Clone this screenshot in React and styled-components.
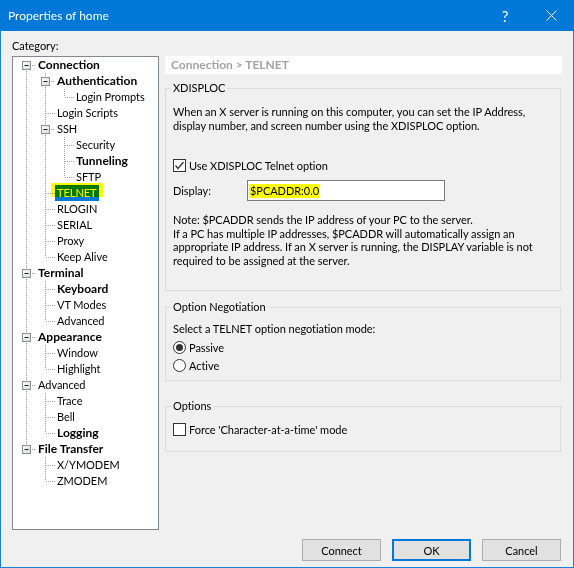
import React from "react";
import styled, { createGlobalStyle, css } from "styled-components";

const GlobalStyle = createGlobalStyle`
  html, body {
    margin: 0;
    padding: 0;
    background: #ffffff;
  }
  body {
    font-family: "Segoe UI", Lato, "Liberation Sans", sans-serif;
    font-size: 11px;
    letter-spacing: -0.04px;
    color: #000;
  }
  * {
    box-sizing: border-box;
  }
`;

const Window = styled.div`
  width: 574px;
  height: 568px;
  display: flex;
  flex-direction: column;
  background: #f0f0f0;
  border: 1px solid #1a7fd6;
  border-top: none;
`;

const TitleBar = styled.div`
  height: 31px;
  flex: none;
  display: flex;
  align-items: center;
  background: #0078d7;
  color: #fff;
  padding-left: 8px;
  margin: 0 -1px;
`;

const Title = styled.span`
  flex: 1;
  font-size: 12px;
  letter-spacing: 0;
`;

const CaptionButton = styled.span`
  width: 46px;
  height: 31px;
  display: flex;
  align-items: center;
  justify-content: center;
  font-size: 15px;
  color: #fff;
`;

const Body = styled.div`
  flex: 1;
  display: flex;
  flex-direction: column;
  padding: 7px 12px 6px 11px;
`;

const CategoryLabel = styled.div`
  height: 18px;
  line-height: 15px;
`;

const Main = styled.div`
  height: 474px;
  display: flex;
  gap: 6px;
`;

const Tree = styled.div`
  width: 147px;
  flex: none;
  background: #fff;
  border: 1px solid #828790;
`;

const TreeRow = styled.div`
  height: 16px;
  display: flex;
  padding-left: 4px;
`;

const Cell = styled.svg`
  width: 19px;
  height: 16px;
  flex: none;
  display: block;
`;

const TreeLabel = styled.span`
  position: relative;
  padding: 0 2px;
  line-height: 16px;
  white-space: nowrap;
  ${(p) =>
    p.$bold &&
    css`
      font-weight: 700;
      font-size: 12px;
      letter-spacing: 0;
    `}
  ${(p) =>
    p.$selected &&
    css`
      background: #0078d7;
      color: #fff;
      &::after {
        content: "";
        position: absolute;
        left: -4px;
        right: -4px;
        top: -2px;
        bottom: 4px;
        background: #ffff00;
        mix-blend-mode: multiply;
      }
    `}
`;

const Panel = styled.div`
  flex: 1;
  display: flex;
  flex-direction: column;
`;

const Header = styled.div`
  height: 18px;
  line-height: 18px;
  background: #fff;
  color: #a3a3a3;
  font-weight: 700;
  font-size: 12px;
  letter-spacing: 0;
  padding-left: 6px;
  margin-right: -1px;
`;

const Group = styled.fieldset`
  margin: ${(p) => p.$top}px 0 0;
  padding: 0 7px ${(p) => p.$bottom}px;
  border: 1px solid #dcdcdc;
  min-width: 0;
`;

const Legend = styled.legend`
  padding: 0 2px;
  margin-left: -2px;
  line-height: 14px;
`;

const Text = styled.p`
  margin: ${(p) => p.$top || 0}px 0 0;
  line-height: ${(p) => p.$lh || 14}px;
`;

const CheckRow = styled.label`
  display: flex;
  align-items: center;
  gap: 3px;
  height: ${(p) => p.$h || 16}px;
  margin-top: ${(p) => p.$top || 0}px;
`;

const Box = styled.span`
  width: 13px;
  height: 13px;
  flex: none;
  border: 1px solid #333;
  background: #fff;
  display: flex;
  align-items: center;
  justify-content: center;
`;

const Radio = styled.span`
  width: 13px;
  height: 13px;
  flex: none;
  border: 1px solid #333;
  border-radius: 50%;
  background: #fff;
  display: flex;
  align-items: center;
  justify-content: center;
  &::after {
    content: "";
    width: 7px;
    height: 7px;
    border-radius: 50%;
    background: ${(p) => (p.$checked ? "#333" : "transparent")};
  }
`;

const DisplayRow = styled.div`
  display: flex;
  align-items: center;
  margin-top: 7px;
`;

const DisplayLabel = styled.span`
  width: 74px;
`;

const Input = styled.div`
  width: 198px;
  height: 21px;
  background: #fff;
  border: 1px solid #7a7a7a;
  padding-left: 1px;
  display: flex;
  align-items: center;
`;

const Mark = styled.span`
  background: #ffff00;
  padding: 0 1px;
  line-height: 14px;
`;

const Footer = styled.div`
  display: flex;
  justify-content: flex-end;
  gap: 11px;
  margin-top: 9px;
`;

const Button = styled.button`
  width: 79px;
  height: 22px;
  font: inherit;
  letter-spacing: inherit;
  color: #000;
  background: #e1e1e1;
  border: ${(p) => (p.$default ? "2px solid #0078d7" : "1px solid #adadad")};
  padding: 0;
`;

const treeItems = [
  { label: "Connection", level: 0, bold: true, box: true },
  { label: "Authentication", level: 1, bold: true, box: true },
  { label: "Login Prompts", level: 2 },
  { label: "Login Scripts", level: 1 },
  { label: "SSH", level: 1, box: true },
  { label: "Security", level: 2 },
  { label: "Tunneling", level: 2, bold: true },
  { label: "SFTP", level: 2 },
  { label: "TELNET", level: 1, selected: true },
  { label: "RLOGIN", level: 1 },
  { label: "SERIAL", level: 1 },
  { label: "Proxy", level: 1 },
  { label: "Keep Alive", level: 1 },
  { label: "Terminal", level: 0, bold: true, box: true },
  { label: "Keyboard", level: 1, bold: true },
  { label: "VT Modes", level: 1 },
  { label: "Advanced", level: 1 },
  { label: "Appearance", level: 0, bold: true, box: true },
  { label: "Window", level: 1 },
  { label: "Highlight", level: 1 },
  { label: "Advanced", level: 0, box: true },
  { label: "Trace", level: 1 },
  { label: "Bell", level: 1 },
  { label: "Logging", level: 1, bold: true },
  { label: "File Transfer", level: 0, bold: true, box: true },
  { label: "X/YMODEM", level: 1 },
  { label: "ZMODEM", level: 1 },
];

// does a sibling at this level follow item i before its parent ends
const hasNextAt = (i, lvl) => {
  for (let j = i + 1; j < treeItems.length; j++) {
    if (treeItems[j].level < lvl) return false;
    if (treeItems[j].level === lvl) return true;
  }
  return false;
};

const DOT = { stroke: "#a0a0a0", strokeWidth: 1, strokeDasharray: "1 1" };

const GuideCell = ({ on }) => (
  <Cell viewBox="0 0 19 16">
    {on && <line x1="9.5" y1="0" x2="9.5" y2="16" {...DOT} />}
  </Cell>
);

const ConnectorCell = ({ first, next, box }) => (
  <Cell viewBox="0 0 19 16">
    <defs>
      <linearGradient id="tbox" x1="0" y1="0" x2="1" y2="1">
        <stop offset="0" stopColor="#ffffff" />
        <stop offset="1" stopColor="#d8d8d8" />
      </linearGradient>
    </defs>
    {!first && <line x1="9.5" y1="0" x2="9.5" y2="8" {...DOT} />}
    {next && <line x1="9.5" y1="8" x2="9.5" y2="16" {...DOT} />}
    <line x1={box ? 15 : 10} y1="8.5" x2="19" y2="8.5" {...DOT} />
    {box && (
      <g>
        <rect x="5.5" y="4.5" width="8" height="8" fill="url(#tbox)" stroke="#8c8f94" />
        <line x1="7.5" y1="8.5" x2="11.5" y2="8.5" stroke="#222" />
      </g>
    )}
  </Cell>
);

const TreeView = () => (
  <Tree>
    {treeItems.map((item, i) => (
      <TreeRow key={i}>
        {Array.from({ length: item.level }, (_, k) => (
          <GuideCell key={k} on={hasNextAt(i, k)} />
        ))}
        <ConnectorCell first={i === 0} next={hasNextAt(i, item.level)} box={item.box} />
        <TreeLabel $bold={item.bold} $selected={item.selected}>
          {item.label}
        </TreeLabel>
      </TreeRow>
    ))}
  </Tree>
);

const CheckMark = () => (
  <svg width="11" height="11" viewBox="0 0 11 11">
    <polyline points="1.5,5.5 4,8.5 9.5,2" fill="none" stroke="#333" strokeWidth="1.3" />
  </svg>
);

const App = () => (
  <>
    <GlobalStyle />
    <Window>
      <TitleBar>
        <Title>Properties of home</Title>
        <CaptionButton>?</CaptionButton>
        <CaptionButton>
          <svg width="11" height="11" viewBox="0 0 11 11">
            <path d="M0.5 0.5L10.5 10.5M10.5 0.5L0.5 10.5" stroke="#fff" strokeWidth="1" />
          </svg>
        </CaptionButton>
      </TitleBar>
      <Body>
        <CategoryLabel>Category:</CategoryLabel>
        <Main>
          <TreeView />
          <Panel>
            <Header>Connection &gt; TELNET</Header>
            <Group $top={7} $bottom={23}>
              <Legend>XDISPLOC</Legend>
              <Text $top={10}>
                When an X server is running on this computer, you can set the IP Address,
                display number, and screen number using the XDISPLOC option.
              </Text>
              <CheckRow $top={24}>
                <Box>
                  <CheckMark />
                </Box>
                Use XDISPLOC Telnet option
              </CheckRow>
              <DisplayRow>
                <DisplayLabel>Display:</DisplayLabel>
                <Input>
                  <Mark>$PCADDR:0.0</Mark>
                </Input>
              </DisplayRow>
              <Text $top={12} $lh={13.6}>
                Note: $PCADDR sends the IP address of your PC to the server.
                <br />
                If a PC has multiple IP addresses, $PCADDR will automatically assign an
                appropriate IP address. If an X server is running, the DISPLAY variable is not
                required to be assigned at the server.
              </Text>
            </Group>
            <Group $top={9} $bottom={6}>
              <Legend>Option Negotiation</Legend>
              <Text $top={8}>Select a TELNET option negotiation mode:</Text>
              <CheckRow $h={18} $top={2}>
                <Radio $checked />
                Passive
              </CheckRow>
              <CheckRow $h={18}>
                <Radio />
                Active
              </CheckRow>
            </Group>
            <Group $top={18} $bottom={13}>
              <Legend>Options</Legend>
              <CheckRow $h={18} $top={7}>
                <Box />
                Force 'Character-at-a-time' mode
              </CheckRow>
            </Group>
          </Panel>
        </Main>
        <Footer>
          <Button>Connect</Button>
          <Button $default>OK</Button>
          <Button>Cancel</Button>
        </Footer>
      </Body>
    </Window>
  </>
);

export default App;
